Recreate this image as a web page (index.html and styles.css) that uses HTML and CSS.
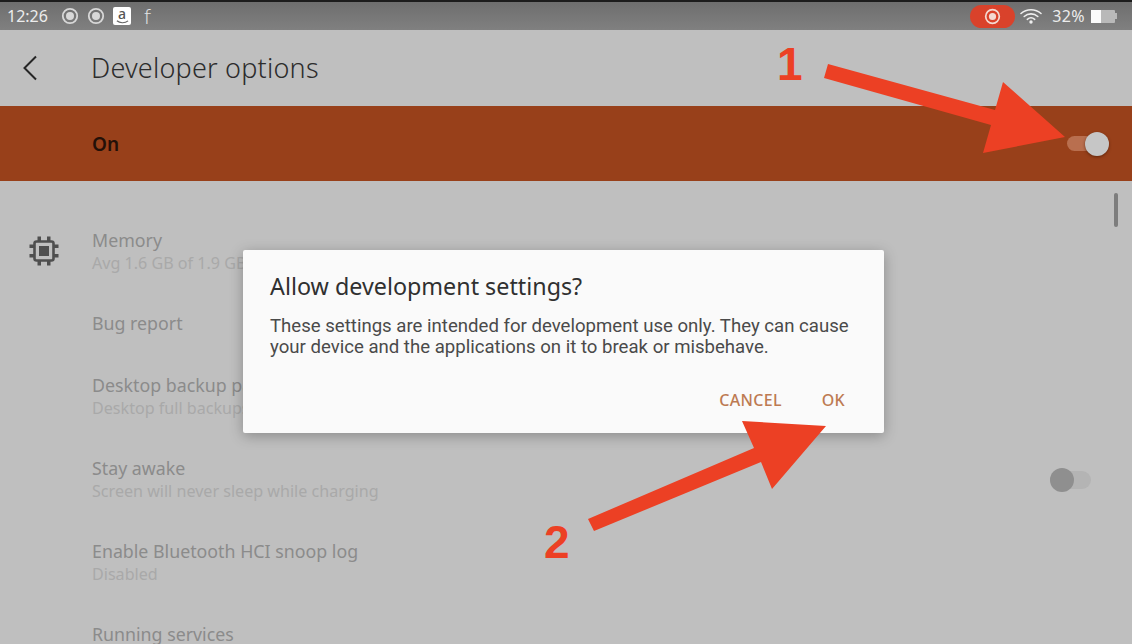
FILE: index.html
```html
<!DOCTYPE html>
<html lang="en">
<head>
<meta charset="utf-8">
<title>Developer options</title>
<link rel="stylesheet" href="styles.css">
</head>
<body>
<div class="screen">
  <header class="status">
    <div class="status-left">
      <span class="time">12:26</span>
      <svg class="ring" viewBox="0 0 18 18"><circle cx="9" cy="9" r="7.2" fill="none" stroke="currentColor" stroke-width="1.8"/><circle cx="9" cy="9" r="4" fill="currentColor"/></svg>
      <svg class="ring" viewBox="0 0 18 18"><circle cx="9" cy="9" r="7.2" fill="none" stroke="currentColor" stroke-width="1.8"/><circle cx="9" cy="9" r="4" fill="currentColor"/></svg>
      <span class="amazon"><span class="amazon-a">a</span><svg class="smile" viewBox="0 0 14 4"><path d="M1 .6C4 3.4 9.500 3.600 13 .8" fill="none" stroke="#666" stroke-width="1.300"/></svg></span>
      <span class="f-mark">f</span>
    </div>
    <div class="status-right">
      <span class="rec"><svg class="rec-dot" viewBox="0 0 18 18"><circle cx="9" cy="9" r="7.200" fill="none" stroke="#f4d9d2" stroke-width="1.800"/><circle cx="9" cy="9" r="3.800" fill="#f4d9d2"/></svg></span>
      <svg class="wifi" viewBox="0 0 22 16"><g fill="none" stroke="#eee" stroke-width="1.600" stroke-linecap="round"><path d="M1 5.500C6.500 .5 15.500 .5 21 5.500"/><path d="M4.200 8.500C8 5 14 5 17.800 8.500"/><path d="M7.300 11.300C9.500 9.500 12.500 9.500 14.700 11.300"/></g><circle cx="11" cy="14" r="1.700" fill="#eee"/></svg>
      <span class="pct">32%</span>
      <span class="battery"><span class="battery-fill"></span><span class="battery-rest"></span><span class="battery-tip"></span></span>
    </div>
  </header>

  <div class="toolbar">
    <svg class="back" viewBox="0 0 16 26"><path d="M14 1.500 2.500 13 14 24.500" fill="none" stroke="#262626" stroke-width="2"/></svg>
    <h1 class="page-title">Developer options</h1>
  </div>

  <div class="master">
    <span class="master-label">On</span>
    <span class="switch switch-on"><span class="thumb thumb-on"></span></span>
  </div>

  <main class="list">
    <div class="row">
      <div class="row-icon">
        <svg class="chip" viewBox="0 0 30 30"><g fill="#4f4f4f"><rect x="8.500" y="0.500" width="3.500" height="4.500"/><rect x="18" y="0.500" width="3.500" height="4.500"/><rect x="8.500" y="25" width="3.500" height="4.500"/><rect x="18" y="25" width="3.500" height="4.500"/><rect x="0.500" y="8.500" width="4.500" height="3.500"/><rect x="0.500" y="18" width="4.500" height="3.500"/><rect x="25" y="8.500" width="4.500" height="3.500"/><rect x="25" y="18" width="4.500" height="3.500"/><rect x="10" y="10" width="10" height="10"/></g><rect x="5.500" y="5.500" width="19" height="19" rx="2" fill="none" stroke="#4f4f4f" stroke-width="2.600"/></svg>
      </div>
      <div class="row-text"><div class="row-title">Memory</div><div class="row-sub">Avg 1.6 GB of 1.9 GB memory used</div></div>
    </div>
    <div class="row row-single">
      <div class="row-icon"></div>
      <div class="row-text"><div class="row-title">Bug report</div></div>
    </div>
    <div class="row">
      <div class="row-icon"></div>
      <div class="row-text"><div class="row-title">Desktop backup password</div><div class="row-sub">Desktop full backups aren't currently protected</div></div>
    </div>
    <div class="row">
      <div class="row-icon"></div>
      <div class="row-text"><div class="row-title">Stay awake</div><div class="row-sub">Screen will never sleep while charging</div></div>
      <span class="switch switch-off"><span class="thumb thumb-off"></span></span>
    </div>
    <div class="row">
      <div class="row-icon"></div>
      <div class="row-text"><div class="row-title">Enable Bluetooth HCI snoop log</div><div class="row-sub">Disabled</div></div>
    </div>
    <div class="row">
      <div class="row-icon"></div>
      <div class="row-text"><div class="row-title">Running services</div></div>
    </div>
  </main>

  <div class="scrollbar"></div>

  <section class="dialog">
    <h2 class="dialog-title">Allow development settings?</h2>
    <p class="dialog-body">These settings are intended for development use only. They can cause your device and the applications on it to break or misbehave.</p>
    <div class="dialog-actions">
      <span class="action">CANCEL</span>
      <span class="action">OK</span>
    </div>
  </section>

  <svg class="annotations" viewBox="0 0 1132 644">
    <polygon fill="#ec4024" points="828,64 824,78 991,125 983,153 1065,137 1003,82 995,110"/>
    <polygon fill="#ec4024" points="588,519 594,531 761,462 772,489 826,426 742,421 754,448"/>
  </svg>
  <span class="callout callout-1">1</span>
  <span class="callout callout-2">2</span>
</div>
</body>
</html>
```

FILE: styles.css
```css
* { box-sizing: border-box; }

html, body {
  margin: 0;
  padding: 0;
  height: 100%;
  overflow: hidden;
  background: #bfbfbf;
}

.screen {
  position: relative;
  width: 1132px;
  height: 644px;
  overflow: hidden;
  display: flex;
  flex-direction: column;
  background: #bfbfbf;
  font-family: "Noto Sans", "Open Sans", sans-serif;
}

/* status bar */
.status {
  flex: none;
  height: 30px;
  border-top: 2px solid #1c1c1c;
  background: linear-gradient(#6e6e6e, #808080);
  display: flex;
  align-items: center;
  justify-content: space-between;
  padding: 0 15px 0 7px;
  color: #ececec;
}

.status-left, .status-right {
  display: flex;
  align-items: center;
}

.time {
  font-size: 16px;
  line-height: 20px;
  width: 54px;
}

.ring {
  width: 18px;
  height: 18px;
  margin-right: 8px;
  color: #d8d8d8;
}

.amazon {
  width: 18px;
  height: 18px;
  border-radius: 2px;
  background: #fff;
  display: flex;
  flex-direction: column;
  align-items: center;
  color: #555;
}

.amazon-a {
  font-size: 14px;
  line-height: 13px;
  font-weight: 500;
}

.smile {
  width: 13px;
  height: 4px;
}

.f-mark {
  margin-left: 13px;
  font-family: Lato, sans-serif;
  font-weight: 300;
  font-size: 21px;
  line-height: 20px;
  color: #e4e4e4;
}

.rec {
  width: 45px;
  height: 23px;
  border-radius: 12px;
  background: #d9422b;
  display: flex;
  align-items: center;
  justify-content: center;
}

.rec-dot {
  width: 17px;
  height: 17px;
}

.wifi {
  width: 22px;
  height: 16px;
  margin-left: 5px;
}

.pct {
  margin-left: 10px;
  font-size: 16px;
  line-height: 20px;
  letter-spacing: 0.4px;
}

.battery {
  margin-left: 6px;
  display: flex;
  align-items: center;
}

.battery-fill {
  width: 10px;
  height: 13px;
  background: #fbfbfb;
}

.battery-rest {
  width: 14px;
  height: 13px;
  background: #b9b9b9;
  border-radius: 0 1px 1px 0;
}

.battery-tip {
  width: 2px;
  height: 6px;
  background: #b9b9b9;
}

/* toolbar */
.toolbar {
  flex: none;
  height: 76px;
  display: flex;
  align-items: center;
  padding-left: 22px;
}

.back {
  width: 16px;
  height: 26px;
}

.page-title {
  margin: 0 0 0 53px;
  font-size: 27px;
  font-weight: 300;
  letter-spacing: 0.2px;
  color: #2c2c2c;
  line-height: 34px;
}

/* master switch bar */
.master {
  flex: none;
  height: 75px;
  background: #98401a;
  display: flex;
  align-items: center;
  justify-content: space-between;
  padding: 0 23px 0 92px;
}

.master-label {
  font-size: 19px;
  font-weight: 600;
  color: #241008;
}

.switch {
  position: relative;
  display: block;
  border-radius: 9px;
}

.switch-on {
  width: 42px;
  height: 15px;
  background: #b96f4f;
}

.thumb {
  position: absolute;
  width: 24px;
  height: 24px;
  border-radius: 50%;
}

.thumb-on {
  right: 0;
  top: -4.500px;
  background: #c6c6c6;
  box-shadow: 0 1px 3px rgba(60, 20, 0, 0.6);
}

.thumb-off {
  left: 0;
  top: -3px;
  background: #8f8f8f;
}

/* settings list */
.list {
  flex: none;
  padding-top: 47px;
  display: flex;
  flex-direction: column;
}

.row {
  flex: none;
  height: 83px;
  display: flex;
  align-items: flex-start;
}

.row-single {
  height: 62px;
}

.row-icon {
  flex: none;
  width: 92px;
  padding: 8px 0 0 29px;
}

.chip {
  display: block;
  width: 30px;
  height: 30px;
}

.row-text {
  flex: 1;
  min-width: 0;
}

.row-title {
  font-size: 17.800px;
  line-height: 24px;
  color: #8b8b8b;
}

.row-sub {
  font-size: 16.100px;
  line-height: 22px;
  color: #a9a9a9;
}

.switch-off {
  flex: none;
  width: 41px;
  height: 18px;
  margin: 15px 41px 0 0;
  background: #b4b4b4;
}

.scrollbar {
  position: absolute;
  left: 1114px;
  top: 193px;
  width: 4px;
  height: 34px;
  border-radius: 2px;
  background: #7d7d7d;
}

/* dialog */
.dialog {
  position: absolute;
  left: 243px;
  top: 250px;
  width: 641px;
  height: 183px;
  background: #fafafa;
  border-radius: 2px;
  box-shadow: 0 3px 14px rgba(0, 0, 0, 0.28);
  padding: 21px 27px 0;
  display: flex;
  flex-direction: column;
}

.dialog-title {
  margin: 0;
  font-size: 23.300px;
  font-weight: 400;
  line-height: 30px;
  color: #303030;
}

.dialog-body {
  margin: 15px 0 0;
  font-family: Roboto, sans-serif;
  font-size: 18.600px;
  line-height: 21px;
  color: #4a4a4a;
}

.dialog-actions {
  margin-top: 32px;
  display: flex;
  justify-content: flex-end;
  gap: 40px;
  padding-right: 12px;
}

.action {
  font-size: 16px;
  line-height: 20px;
  font-weight: 500;
  color: #bd7a52;
  letter-spacing: 0.3px;
}

/* annotations over the screenshot */
.annotations {
  position: absolute;
  left: 0;
  top: 0;
  width: 1132px;
  height: 644px;
}

.callout {
  position: absolute;
  font-family: "Liberation Sans", Arial, sans-serif;
  font-weight: 700;
  font-size: 46px;
  line-height: 46px;
  color: #ec4024;
}

.callout-1 { left: 777px; top: 41px; }
.callout-2 { left: 544px; top: 519px; }
```
